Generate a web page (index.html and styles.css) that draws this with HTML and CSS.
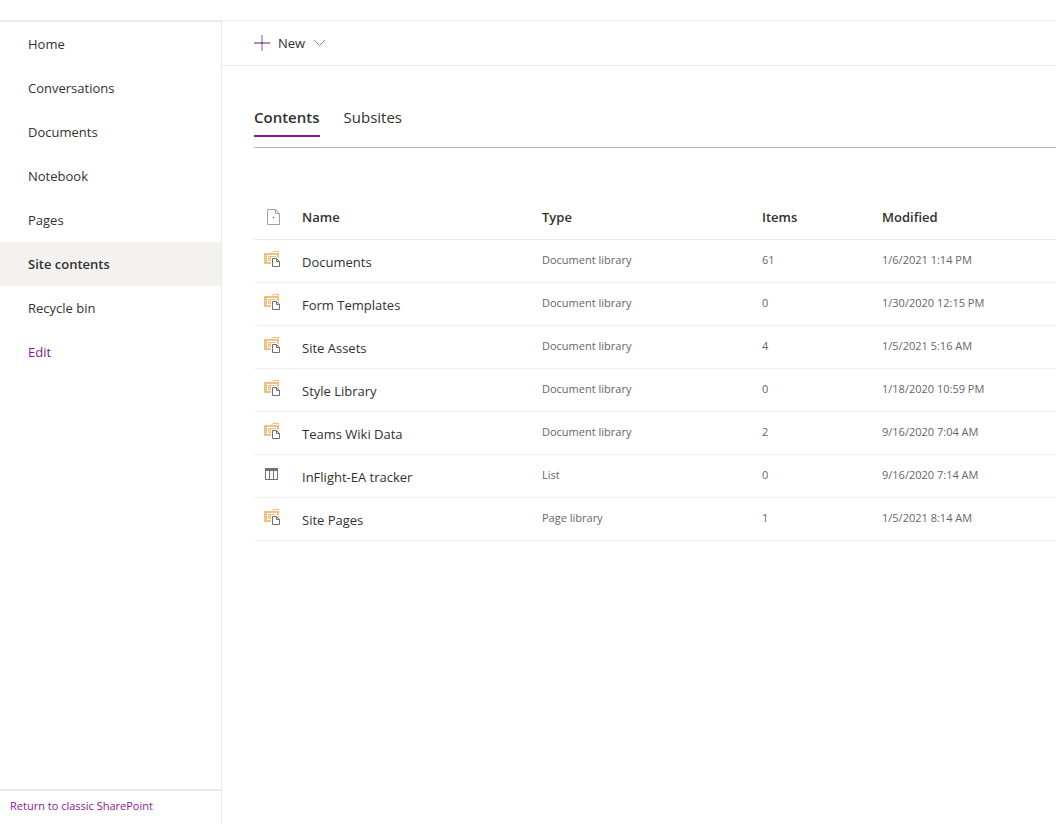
FILE: index.html
```html
<!DOCTYPE html>
<html lang="en">
<head>
    <meta charset="UTF-8">
    <meta name="viewport" content="width=device-width, initial-scale=1.0">
    <title>Site contents</title>
    <link rel="stylesheet" href="styles.css">
</head>
<body>
    <svg class="icon-defs" width="0" height="0" aria-hidden="true">
        <symbol id="icon-library" viewBox="0 0 16 16">
            <path fill="#f0c183" d="M0 2h7l2-2h6v13H0z"/>
            <path fill="#fff" d="M9 1h5v1H8zM3 4h10v7H3z"/>
            <path fill="#f0c183" d="M4 5h8v5H4z"/>
            <path fill="#fff" d="M5 6h1v1H5zM7 6h3v1H7zM5 8h1v1H5zM7 8h2v1H7z"/>
            <path fill="#fff" d="M7 6h6l3 3v7H7z"/>
            <path fill="none" stroke="#6e6e6e" d="M8.500 7.500h4l3 3v5h-7zM12.500 7.500v3h3"/>
        </symbol>
        <symbol id="icon-list" viewBox="0 0 16 16">
            <path fill="#737373" d="M1 2h13v12H1z"/>
            <path fill="#fff" d="M2 5h3v8H2zM6 5h3v8H6zM10 5h3v8h-3z"/>
        </symbol>
    </svg>
    <div class="page">
        <div class="suite-bar"></div>
        <div class="layout">
            <div class="sidebar">
                <nav>
                    <ul class="nav-list">
                        <li><a href="#">Home</a></li>
                        <li><a href="#">Conversations</a></li>
                        <li><a href="#">Documents</a></li>
                        <li><a href="#">Notebook</a></li>
                        <li><a href="#">Pages</a></li>
                        <li><a href="#" class="selected">Site contents</a></li>
                        <li><a href="#">Recycle bin</a></li>
                        <li><a href="#" class="edit">Edit</a></li>
                    </ul>
                </nav>
                <div class="sidebar-footer">
                    <a href="#">Return to classic SharePoint</a>
                </div>
            </div>
            <main>
                <div class="command-bar">
                    <button type="button" class="new-button">
                        <svg width="16" height="16" viewBox="0 0 16 16" aria-hidden="true">
                            <path fill="#b58bb8" d="M0 7h16v2H0z"/>
                            <path fill="#b3b0ea" d="M7 0h2v16H7z"/>
                            <path fill="#8c4f96" d="M7 7h2v2H7z"/>
                        </svg>
                        <span>New</span>
                        <svg width="13" height="16" viewBox="0 0 13 16" aria-hidden="true">
                            <path fill="none" stroke="#a8865f" d="M1 5l5.500 5.500L12 5"/>
                        </svg>
                    </button>
                </div>
                <div class="content">
                    <div class="tabs">
                        <button type="button" class="tab active">Contents</button>
                        <button type="button" class="tab">Subsites</button>
                    </div>
                    <table>
                        <thead>
                            <tr>
                                <th class="col-icon">
                                    <svg class="file-icon" width="16" height="16" viewBox="0 0 16 16" role="img" aria-label="File type">
                                        <path fill="none" stroke="#a0a0a0" d="M1.500 0.500h8l4 4v11h-12zM9.500 0.500v4h4"/>
                                        <path fill="#333" d="M7 8h1v1H7z"/>
                                    </svg>
                                </th>
                                <th class="col-name">Name</th>
                                <th class="col-type">Type</th>
                                <th class="col-items">Items</th>
                                <th>Modified</th>
                            </tr>
                        </thead>
                        <tbody>
                            <tr>
                                <td class="col-icon"><svg width="16" height="16"><use href="#icon-library"/></svg></td>
                                <td class="name"><a href="#">Documents</a></td>
                                <td>Document library</td>
                                <td>61</td>
                                <td>1/6/2021 1:14 PM</td>
                            </tr>
                            <tr>
                                <td class="col-icon"><svg width="16" height="16"><use href="#icon-library"/></svg></td>
                                <td class="name"><a href="#">Form Templates</a></td>
                                <td>Document library</td>
                                <td>0</td>
                                <td>1/30/2020 12:15 PM</td>
                            </tr>
                            <tr>
                                <td class="col-icon"><svg width="16" height="16"><use href="#icon-library"/></svg></td>
                                <td class="name"><a href="#">Site Assets</a></td>
                                <td>Document library</td>
                                <td>4</td>
                                <td>1/5/2021 5:16 AM</td>
                            </tr>
                            <tr>
                                <td class="col-icon"><svg width="16" height="16"><use href="#icon-library"/></svg></td>
                                <td class="name"><a href="#">Style Library</a></td>
                                <td>Document library</td>
                                <td>0</td>
                                <td>1/18/2020 10:59 PM</td>
                            </tr>
                            <tr>
                                <td class="col-icon"><svg width="16" height="16"><use href="#icon-library"/></svg></td>
                                <td class="name"><a href="#">Teams Wiki Data</a></td>
                                <td>Document library</td>
                                <td>2</td>
                                <td>9/16/2020 7:04 AM</td>
                            </tr>
                            <tr>
                                <td class="col-icon"><svg width="16" height="16"><use href="#icon-list"/></svg></td>
                                <td class="name"><a href="#">InFlight-EA tracker</a></td>
                                <td>List</td>
                                <td>0</td>
                                <td>9/16/2020 7:14 AM</td>
                            </tr>
                            <tr>
                                <td class="col-icon"><svg width="16" height="16"><use href="#icon-library"/></svg></td>
                                <td class="name"><a href="#">Site Pages</a></td>
                                <td>Page library</td>
                                <td>1</td>
                                <td>1/5/2021 8:14 AM</td>
                            </tr>
                        </tbody>
                    </table>
                </div>
            </main>
        </div>
    </div>
</body>
</html>
```
FILE: styles.css
```css
* {
    box-sizing: border-box;
}
body {
    margin: 0;
    font-family: "Segoe UI", "Open Sans", sans-serif;
    font-size: 13px;
    line-height: 20px;
    color: #323130;
    background-color: #fff;
}
a {
    color: inherit;
    text-decoration: none;
}
svg {
    display: block;
}
button {
    font: inherit;
    color: inherit;
    background: none;
    border: none;
    padding: 0;
    cursor: pointer;
}
.icon-defs {
    position: absolute;
}
.page {
    display: flex;
    flex-direction: column;
    min-height: 100vh;
}
.suite-bar {
    height: 20px;
}
.layout {
    display: flex;
    flex: 1;
}
.sidebar {
    display: flex;
    flex-direction: column;
    justify-content: space-between;
    width: 222px;
    flex-shrink: 0;
    border-right: 1px solid #eaeaea;
}
nav {
    border-top: 2px solid #eaeaea;
}
.nav-list {
    list-style-type: none;
    margin: 0;
    padding: 0;
}
.nav-list a {
    display: block;
    padding: 12px 28px;
}
.nav-list .selected {
    background-color: #f3f2f1;
    font-weight: 600;
}
.nav-list .edit {
    color: #881798;
}
.sidebar-footer {
    border-top: 2px solid #eaeaea;
    padding: 5px 10px 8px;
    font-size: 11px;
    color: #881798;
}
main {
    flex: 1;
    min-width: 0;
    border-top: 1px solid #eaeaea;
}
.command-bar {
    display: flex;
    align-items: center;
    height: 45px;
    padding-left: 32px;
    border-bottom: 1px solid #eaeaea;
}
.new-button {
    display: flex;
    align-items: center;
    gap: 8px;
}
.content {
    padding: 32px 0 0 32px;
}
.tabs {
    display: flex;
    gap: 24px;
    height: 50px;
    border-bottom: 1px solid #b5b5b5;
}
.tab {
    height: 39px;
    font-size: 15px;
    border-bottom: 2px solid transparent;
}
.tab.active {
    font-weight: 600;
    border-bottom-color: #881798;
}
table {
    width: 100%;
    margin-top: 48px;
    border-collapse: separate;
    border-spacing: 0;
    table-layout: fixed;
    text-align: left;
}
th, td {
    padding: 0 0 2px;
    border-bottom: 1px solid #efefef;
}
th {
    height: 44px;
    font-weight: 600;
    border-bottom-color: #e8e8e8;
}
td {
    height: 43px;
    font-size: 11px;
    color: #666;
}
td.name {
    padding: 2px 0 0;
    font-size: 13px;
    color: #323130;
}
.col-icon {
    width: 48px;
    padding-left: 10px;
}
td.col-icon {
    padding-bottom: 4px;
}
.file-icon {
    margin-left: 2px;
}
.col-name {
    width: 240px;
}
.col-type {
    width: 220px;
}
.col-items {
    width: 120px;
}
```
